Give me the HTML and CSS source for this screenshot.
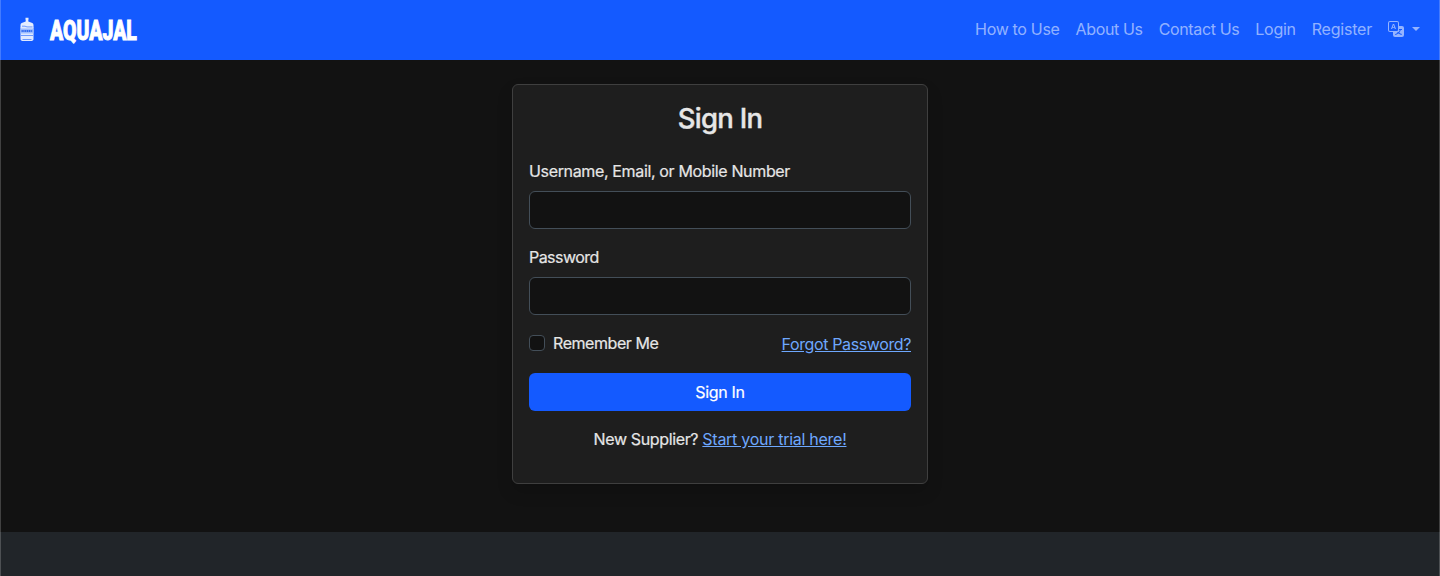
FILE: index.html
```html
<!DOCTYPE html>
<html lang="en">
<head>
<meta charset="utf-8">
<title>Sign In - AQUAJAL</title>
<link rel="stylesheet" href="styles.css">
</head>
<body>
<header class="navbar">
  <a class="brand" href="#">
    <svg class="brand-icon" width="16" height="25" viewBox="0 0 16 25" aria-hidden="true">
      <path d="M6.500 .8h3v2h-3zM6.700 2.500h2.600v1.900l4 1.600q1.200.6 1.200 2v2.500h-13V8q0-1.400 1.200-2l4-1.600z" fill="#e4edff"/>
      <path d="M1.500 10h13v12q0 2-3 2h-7q-3 0-3-2z" fill="#dfe9ff"/>
      <path d="M3 9.200h3l2 .7h5.500M2 18.500h12M3.500 22.500h9" stroke="#4d84ff" stroke-width=".8" fill="none"/>
      <path d="M1.500 11.500h13v5h-13z" fill="#9dbdff"/>
      <path d="M2.500 14h11" stroke="#2f69ef" stroke-width="2" stroke-dasharray="1.300 .5"/>
    </svg>
    <span class="brand-name">AQUAJAL</span>
  </a>
  <nav class="nav-links">
    <a class="nav-howto" href="#">How to Use</a>
    <a class="nav-about" href="#">About Us</a>
    <a class="nav-contact" href="#">Contact Us</a>
    <a class="nav-login" href="#">Login</a>
    <a class="nav-register" href="#">Register</a>
    <a class="nav-lang" href="#" aria-label="Language">
      <svg width="16" height="16" viewBox="0 0 16 16" fill="currentColor"><path d="M4.545 6.714 4.110 8H3l1.862-5h1.284L8 8H6.833l-.435-1.286zm1.634-.736L5.500 3.956h-.049l-.679 2.022z"/><path d="M0 2a2 2 0 0 1 2-2h7a2 2 0 0 1 2 2v3h3a2 2 0 0 1 2 2v7a2 2 0 0 1-2 2H7a2 2 0 0 1-2-2v-3H2a2 2 0 0 1-2-2zm2-1a1 1 0 0 0-1 1v7a1 1 0 0 0 1 1h7a1 1 0 0 0 1-1V2a1 1 0 0 0-1-1zm7.138 9.995q.289.451.63.846c-.748.575-1.673 1.001-2.768 1.292.178.217.451.635.555.867 1.125-.359 2.080-.844 2.886-1.494.777.665 1.739 1.165 2.930 1.472.133-.254.414-.673.629-.890-1.125-.253-2.057-.694-2.820-1.284.681-.747 1.222-1.651 1.621-2.757H14V8h-3v1.047h.765c-.318.844-.740 1.546-1.272 2.130a6 6 0 0 1-.415-.492 2 2 0 0 1-.940.310"/></svg>
      <span class="caret"></span>
    </a>
  </nav>
</header>
<main class="content">
  <form class="card">
    <h1 class="title">Sign In</h1>
    <label class="label label-user" for="user">Username, Email, or Mobile Number</label>
    <input class="input" id="user" type="text">
    <label class="label label-pass" for="pass">Password</label>
    <input class="input" id="pass" type="password">
    <div class="options">
      <label class="remember"><input class="check" type="checkbox"><span class="remember-text">Remember Me</span></label>
      <a class="link forgot" href="#">Forgot Password?</a>
    </div>
    <button class="submit" type="button"><span class="submit-text">Sign In</span></button>
    <p class="signup"><span class="signup-text">New Supplier?</span> <a class="link trial" href="#">Start your trial here!</a></p>
  </form>
</main>
<footer class="footer"></footer>
<div class="frame"></div>
</body>
</html>
```
FILE: styles.css
```css
* { box-sizing: border-box; }
body {
  margin: 0;
  height: 576px;
  overflow: hidden;
  display: flex;
  flex-direction: column;
  background: #121212;
  color: #e6e6e6;
  font: 16px/24px Inter, "Liberation Sans", sans-serif;
  letter-spacing: -0.27px;
  -webkit-text-stroke: .2px currentColor;
}
.navbar {
  height: 60px;
  flex: none;
  display: flex;
  justify-content: space-between;
  align-items: center;
  padding: 0 20px 0 19px;
  background: #145aff;
}
.brand { display: flex; align-items: center; gap: 15px; color: #fff; text-decoration: none; }
.brand-icon { display: block; margin-bottom: 2px; }
.brand-name {
  font: 900 27px/36px Roboto, sans-serif;
  letter-spacing: 0;
  -webkit-text-stroke: .9px #fff;
  transform: translateY(1px) scaleX(.72);
  transform-origin: left center;
}
.nav-links { display: flex; gap: 16px; align-items: center; padding-bottom: 2px; }
.nav-links a { color: rgba(255, 255, 255, .55); text-decoration: none; white-space: nowrap; -webkit-text-stroke-width: 0; }
.nav-links .nav-howto { letter-spacing: -.32px; }
.nav-links .nav-about { letter-spacing: -.35px; }
.nav-links .nav-contact { letter-spacing: -.37px; }
.nav-links .nav-register { letter-spacing: -.21px; }
.nav-links .nav-lang { display: flex; align-items: center; gap: 8px; }
.caret { border: 4px solid transparent; border-top-color: currentColor; border-bottom: 0; }
.content { height: 472px; flex: none; display: flex; justify-content: center; align-items: flex-start; padding-top: 24px; }
.card {
  width: 416px;
  height: 400px;
  padding: 16px;
  display: flex;
  flex-direction: column;
  background: #1e1e1e;
  border: 1px solid #3f3f3f;
  border-radius: 6px;
  box-shadow: 0 8px 16px rgba(0, 0, 0, .15);
}
.title { margin: 0 0 24px; font-size: 27.5px; line-height: 34px; font-weight: 500; text-align: center; letter-spacing: -.75px; -webkit-text-stroke-width: .4px; }
.label { margin-bottom: 8px; }
.label-user { letter-spacing: -.35px; }
.label-pass { letter-spacing: -.55px; }
.remember-text { letter-spacing: -.43px; }
.input { width: 100%; height: 38px; margin: 0 0 16px; background: #121212; border: 1px solid #434e58; border-radius: 6px; color: #e6e6e6; padding: 6px 12px; }
.options { display: flex; justify-content: space-between; height: 26px; margin-bottom: 16px; }
.remember { display: flex; gap: 8px; height: 24px; }
.check { appearance: none; width: 16px; height: 16px; margin: 4px 0 0; background: #121212; border: 1px solid #434e58; border-radius: 4px; }
.link { color: #6ea8fe; text-decoration: underline; -webkit-text-stroke-width: 0; }
.forgot { padding-top: 1px; letter-spacing: -.38px; }
.submit { height: 38px; flex: none; border: 0; border-radius: 6px; background: #145aff; color: #fff; font: inherit; letter-spacing: -.33px; }
.signup { margin: 16px 0 0; text-align: center; }
.signup-text { letter-spacing: -.36px; }
.frame { position: absolute; inset: 0; border: solid rgba(255, 255, 255, .2); border-width: 0 1px; pointer-events: none; }
.footer { flex: 1; background: #212529; }
```
